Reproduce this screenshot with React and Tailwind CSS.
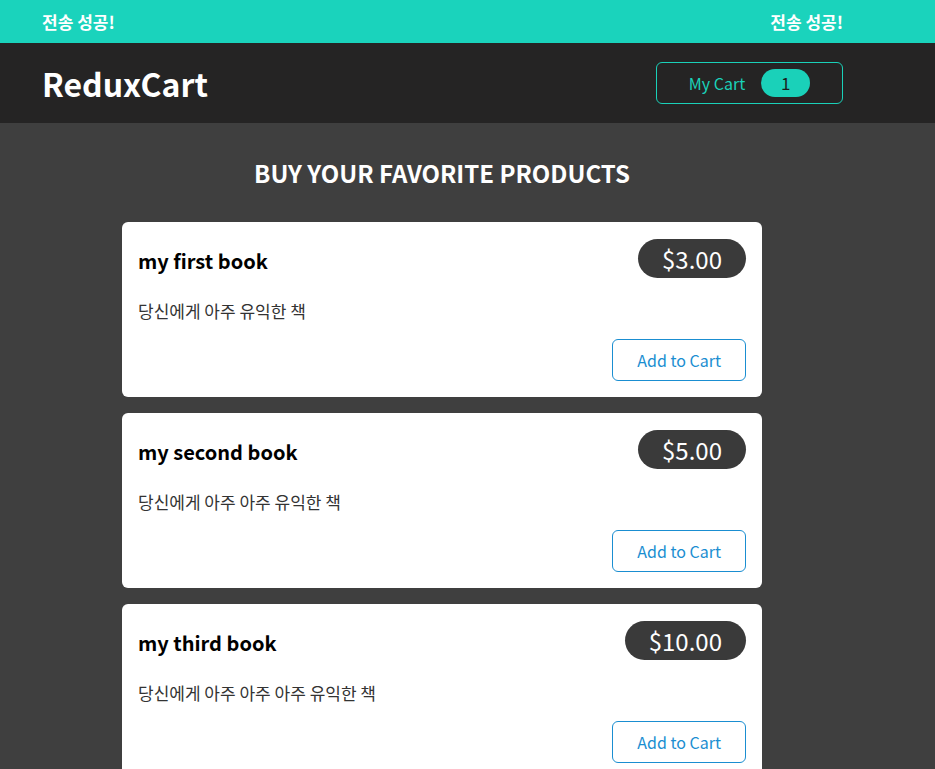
const products = [
  { id: 'p1', title: 'my first book', price: 3, description: '당신에게 아주 유익한 책' },
  { id: 'p2', title: 'my second book', price: 5, description: '당신에게 아주 아주 유익한 책' },
  { id: 'p3', title: 'my third book', price: 10, description: '당신에게 아주 아주 아주 유익한 책' },
];

const font = { fontFamily: '"Noto Sans CJK KR", "Noto Sans", sans-serif' };

function Notification() {
  return (
    <section className="bg-[#1ad3bc] text-white">
      <div className="w-[885px] h-[43px] px-[42px] flex items-center justify-between text-[17px] font-bold">
        <h2>전송 성공!</h2>
        <p>전송 성공!</p>
      </div>
    </section>
  );
}

function Header() {
  return (
    <header className="bg-[#252424]">
      <div className="w-[885px] h-[80px] px-[42px] flex items-center justify-between">
        <h1 className="text-white text-[32px] font-bold leading-none">ReduxCart</h1>
        <button className="h-[42px] w-[187px] flex items-center justify-center gap-4 border border-[#1ad1b9] rounded-md text-[#1ad1b9] text-[16px]">
          <span>My Cart</span>
          <span className="bg-[#1ad1b9] text-[#1d1d1d] rounded-full w-[49px] h-[28px] flex items-center justify-center text-[17px]">1</span>
        </button>
      </div>
    </header>
  );
}

function ProductItem({ title, price, description }) {
  return (
    <li className="bg-white rounded-md px-4 pt-[17px] pb-4">
      <header className="flex items-center justify-between h-[39px]">
        <h3 className="text-[20px] font-bold text-black pt-[4px]">{title}</h3>
        <div className="bg-[#3a3a3a] text-white rounded-full px-6 h-[39px] flex items-center text-[24px]">
          ${price.toFixed(2)}
        </div>
      </header>
      <p className="mt-[22px] text-[17px] leading-[22px] text-[#333]">{description}</p>
      <div className="flex justify-end mt-[17px]">
        <button className="h-[42px] px-[24px] border border-[#1a8ed1] rounded-md text-[#1a8ed1] text-[16px]">
          Add to Cart
        </button>
      </div>
    </li>
  );
}

export default function App() {
  return (
    <div className="min-h-screen bg-[#3f3f3f]" style={font}>
      <Notification />
      <Header />
      <main className="w-[884px]">
        <section className="w-[640px] mx-auto">
          <h2 className="text-white text-[24px] font-bold uppercase text-center mt-[33px] mb-[32px] leading-[34px]">
            Buy your favorite products
          </h2>
          <ul className="flex flex-col gap-4">
            {products.map((p) => (
              <ProductItem key={p.id} {...p} />
            ))}
          </ul>
        </section>
      </main>
    </div>
  );
}
